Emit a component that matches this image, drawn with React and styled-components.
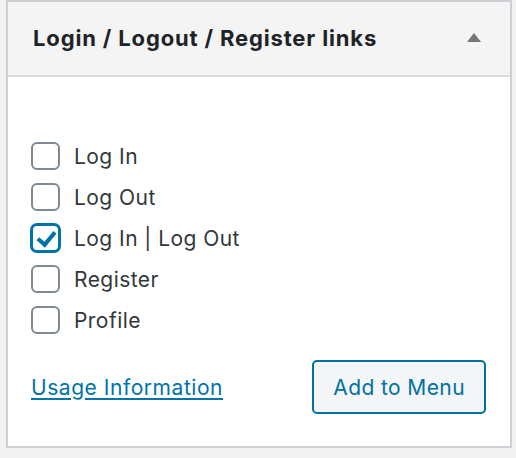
import React, { useState } from 'react';
import styled, { createGlobalStyle } from 'styled-components';

const items = [
  { id: 'login', label: 'Log In' },
  { id: 'logout', label: 'Log Out' },
  { id: 'loginout', label: 'Log In | Log Out' },
  { id: 'register', label: 'Register' },
  { id: 'profile', label: 'Profile' },
];

export default function App() {
  const [checked, setChecked] = useState(['loginout']);

  const toggle = (id) => {
    if (checked.includes(id)) {
      setChecked(checked.filter((c) => c !== id));
    } else {
      setChecked([...checked, id]);
    }
  };

  return (
    <>
      <GlobalStyle />
      <Panel>
        <Header>
          <Title>Login / Logout / Register links</Title>
          <Toggle aria-label="Toggle panel">
            <svg width="14" height="9" viewBox="0 0 14 9">
              <path d="M7 0 L14 9 L0 9 Z" fill="#72777c" />
            </svg>
          </Toggle>
        </Header>
        <Body>
          <List>
            {items.map((item) => (
              <Item key={item.id}>
                <Box
                  type="checkbox"
                  id={`item-${item.id}`}
                  checked={checked.includes(item.id)}
                  onChange={() => toggle(item.id)}
                />
                <ItemLabel htmlFor={`item-${item.id}`}>{item.label}</ItemLabel>
              </Item>
            ))}
          </List>
          <Footer>
            <HelpLink href="#usage">Usage Information</HelpLink>
            <AddButton type="button">Add to Menu</AddButton>
          </Footer>
        </Body>
      </Panel>
    </>
  );
}

// ====== Styled Components ======
const GlobalStyle = createGlobalStyle`
  html, body {
    margin: 0;
    background: #f1f1f1;
  }
  body {
    font-family: Inter, "Liberation Sans", sans-serif;
    color: #32373c;
  }
`;

const Panel = styled.section`
  width: 506px;
  height: 448px;
  box-sizing: border-box;
  margin-left: 6px;
  border: 2px solid #ccd0d4;
  background: #fff;
  display: flex;
  flex-direction: column;
`;

const Header = styled.div`
  height: 75px;
  box-sizing: border-box;
  display: flex;
  align-items: center;
  justify-content: space-between;
  padding: 0 26px 2px 25px;
  background: #f4f4f4;
  border-bottom: 2px solid #dcdcde;
`;

const Title = styled.h3`
  margin: 0;
  font-size: 22px;
  letter-spacing: 0.85px;
  font-weight: 700;
  color: #1d2327;
`;

const Toggle = styled.button`
  display: flex;
  align-items: center;
  justify-content: center;
  width: 20px;
  height: 20px;
  padding: 0;
  border: none;
  background: none;
  cursor: pointer;
`;

const Body = styled.div`
  flex: 1;
  display: flex;
  flex-direction: column;
  padding: 65px 24px 0 23px;
`;

const List = styled.ul`
  list-style: none;
  margin: 0;
  padding: 0;
  display: flex;
  flex-direction: column;
  gap: 13px;
`;

const Item = styled.li`
  display: flex;
  align-items: center;
  gap: 14px;
  height: 28px;
`;

const Box = styled.input`
  appearance: none;
  margin: 0;
  width: 29px;
  height: 28px;
  box-sizing: border-box;
  border: 2px solid #7e8993;
  border-radius: 6px;
  background: #fff;
  cursor: pointer;
  position: relative;

  &:checked {
    border-color: #0073aa;
    box-shadow: 0 0 0 1px #0073aa;
  }

  &:checked::after {
    content: '';
    position: absolute;
    left: 8px;
    top: 2px;
    width: 7px;
    height: 14px;
    border: solid #0073aa;
    border-width: 0 4px 4px 0;
    transform: rotate(40deg);
  }
`;

const ItemLabel = styled.label`
  font-size: 21px;
  letter-spacing: 0.45px;
  color: #32373c;
  cursor: pointer;
`;

const Footer = styled.div`
  display: flex;
  align-items: center;
  justify-content: space-between;
  margin-top: 26px;
`;

const HelpLink = styled.a`
  font-size: 21px;
  letter-spacing: 0.55px;
  color: #0073aa;
  text-decoration: underline;
  text-underline-offset: 3px;
`;

const AddButton = styled.button`
  height: 54px;
  padding: 0 19px;
  font-family: inherit;
  font-size: 21px;
  letter-spacing: 0.4px;
  color: #0071a1;
  background: #f3f5f6;
  border: 2px solid #0071a1;
  border-radius: 5px;
  cursor: pointer;
`;
